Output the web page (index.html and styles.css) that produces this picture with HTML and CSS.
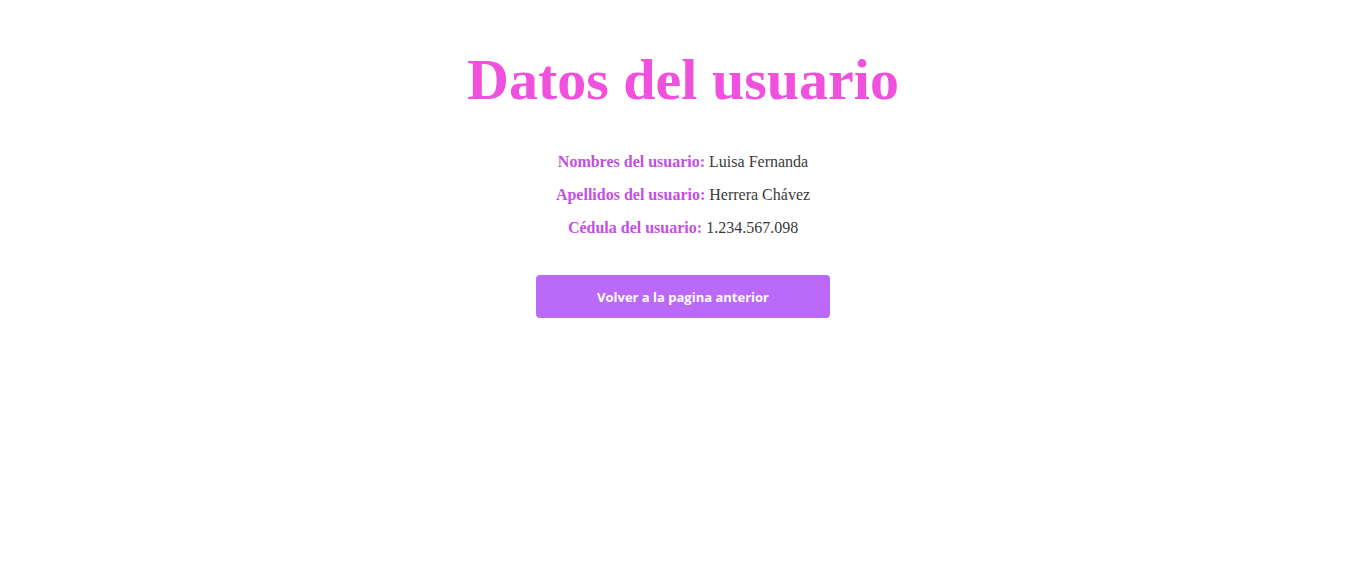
FILE: index.html
```html
<!DOCTYPE html>
<html lang="es">
<head>
<meta charset="utf-8">
<title>Datos del usuario</title>
<link rel="stylesheet" href="styles.css">
</head>
<body>
<main class="page">
  <h1 class="title">Datos del usuario</h1>
  <div class="info">
    <p class="row"><span class="label">Nombres del usuario:</span> Luisa Fernanda</p>
    <p class="row"><span class="label">Apellidos del usuario:</span> Herrera Chávez</p>
    <p class="row"><span class="label">Cédula del usuario:</span> 1.234.567.098</p>
  </div>
  <button class="back" type="button">Volver a la pagina anterior</button>
</main>
</body>
</html>
```
FILE: styles.css
```css
html, body {
  margin: 0;
  padding: 0;
  background: #ffffff;
}
.page {
  display: flex;
  flex-direction: column;
  align-items: center;
  font-family: "Liberation Serif", "Times New Roman", serif;
  padding-top: 40px;
}
.title {
  margin: 0;
  font-size: 58px;
  line-height: 80px;
  font-weight: 700;
  color: #f050de;
}
.info {
  display: flex;
  flex-direction: column;
  align-items: center;
  gap: 15px;
  margin-top: 33px;
}
.row {
  margin: 0;
  font-size: 16px;
  line-height: 18px;
  color: #3a3a3a;
}
.label {
  font-weight: 700;
  color: #c44fe2;
}
.back {
  margin-top: 38px;
  width: 294px;
  height: 43px;
  border: none;
  border-radius: 4px;
  background: #bb69f9;
  color: #ffffff;
  font-family: "Open Sans", "Noto Sans", sans-serif;
  font-weight: 700;
  font-size: 13px;
  cursor: pointer;
}
```
